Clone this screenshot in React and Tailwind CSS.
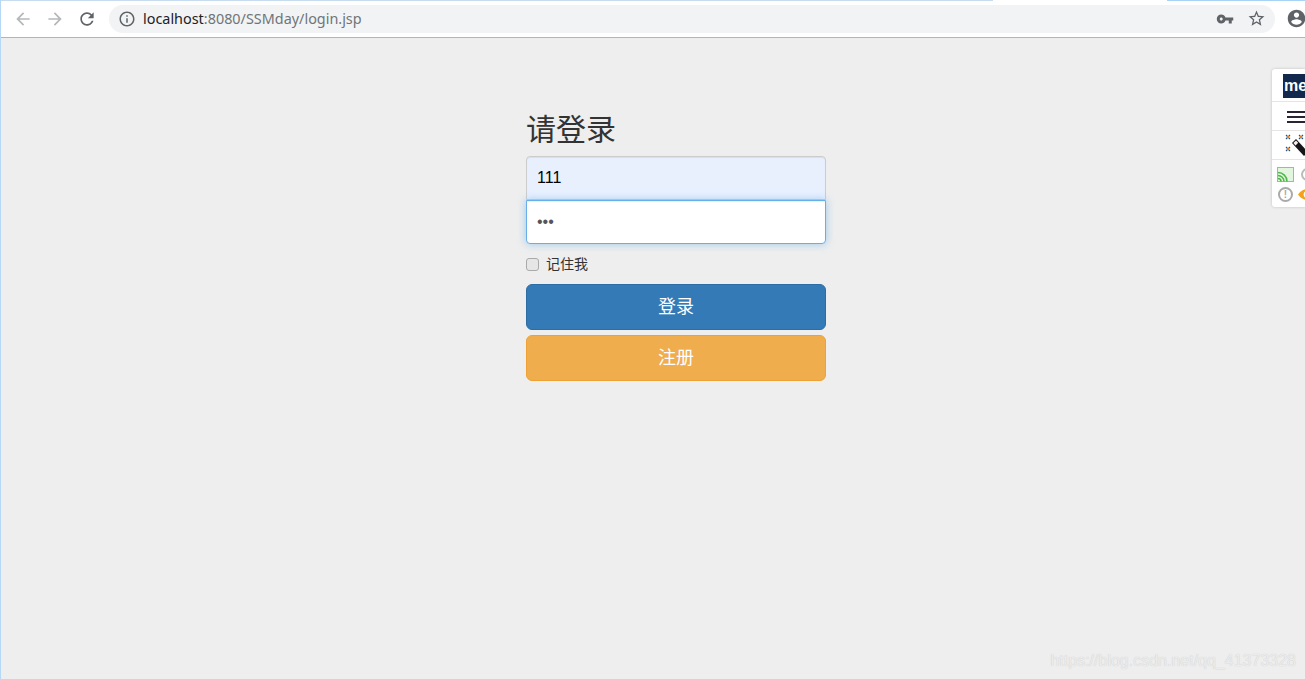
import React from "react";

const cjk = "font-['Liberation_Sans','Noto_Sans_CJK_SC',sans-serif]";

function Mi({ d, size = 24, color = "#5f6368", className = "" }) {
  return (
    <svg width={size} height={size} viewBox="0 0 24 24" fill={color} className={`shrink-0 ${className}`}>
      <path d={d} />
    </svg>
  );
}

const P = {
  back: "M20 11H7.83l5.59-5.59L12 4l-8 8 8 8 1.41-1.41L7.83 13H20v-2z",
  fwd: "M12 4l-1.41 1.41L16.17 11H4v2h12.17l-5.58 5.59L12 20l8-8z",
  reload: "M17.65 6.35C16.2 4.9 14.21 4 12 4c-4.42 0-7.99 3.58-7.99 8s3.57 8 7.99 8c3.73 0 6.84-2.55 7.73-6h-2.08c-.82 2.33-3.04 4-5.65 4-3.31 0-6-2.69-6-6s2.69-6 6-6c1.66 0 3.14.69 4.22 1.78L13 11h7V4l-2.35 2.35z",
  info: "M11 7h2v2h-2zm0 4h2v6h-2zm1-9C6.48 2 2 6.48 2 12s4.48 10 10 10 10-4.48 10-10S17.52 2 12 2zm0 18c-4.41 0-8-3.59-8-8s3.59-8 8-8 8 3.59 8 8-3.59 8-8 8z",
  key: "M12.65 10C11.83 7.67 9.61 6 7 6c-3.31 0-6 2.69-6 6s2.69 6 6 6c2.61 0 4.83-1.67 5.65-4H17v4h4v-4h2v-4H12.65zM7 14c-1.1 0-2-.9-2-2s.9-2 2-2 2 .9 2 2-.9 2-2 2z",
  star: "M22 9.24l-7.19-.62L12 2 9.19 8.63 2 9.24l5.46 4.73L5.82 21 12 17.27 18.18 21l-1.63-7.03L22 9.24zM12 15.4l-3.76 2.27 1-4.28-3.32-2.88 4.38-.38L12 6.1l1.71 4.04 4.38.38-3.32 2.88 1 4.28L12 15.4z",
  user: "M12 2C6.48 2 2 6.48 2 12s4.48 10 10 10 10-4.48 10-10S17.52 2 12 2zm0 3c1.66 0 3 1.34 3 3s-1.34 3-3 3-3-1.34-3-3 1.34-3 3-3zm0 14.2c-2.5 0-4.71-1.28-6-3.22.03-1.99 4-3.08 6-3.08 1.99 0 5.97 1.09 6 3.08-1.29 1.94-3.5 3.22-6 3.22z",
};

function TopBar() {
  return (
    <div className="relative flex h-[38px] shrink-0 items-center border-b border-[#b4b4b4] bg-white pl-[12px]">
      <div className="absolute left-0 top-0 h-px w-[992px] bg-[#c8dcf0]" />
      <div className="absolute right-0 top-0 h-px w-[138px] bg-[#a9d3f5]" />
      <Mi d={P.back} size={20} color="#b5b8bb" />
      <Mi d={P.fwd} size={20} color="#b5b8bb" className="ml-3" />
      <Mi d={P.reload} size={20} className="ml-3" />
      <div className="ml-3 flex h-[28px] w-[1166px] shrink-0 items-center rounded-full bg-[#f1f3f4] pl-[9px] pr-[9px]">
        <Mi d={P.info} size={18} />
        <span className="ml-[7px] text-[14.4px] text-[#202124]">localhost</span>
        <span className="text-[14.4px] text-[#70757a]">:8080/SSMday/login.jsp</span>
        <div className="ml-auto flex items-center gap-[13px]">
          <Mi d={P.key} size={18} />
          <Mi d={P.star} size={19} />
        </div>
      </div>
      <Mi d={P.user} size={21} className="ml-[11px]" />
    </div>
  );
}

function LoginForm() {
  return (
    <form className={`ml-[525px] mt-[71px] flex w-[300px] flex-col ${cjk}`}>
      <h2 className="h-[47px] text-[30px] leading-[41px] text-[#333]">请登录</h2>
      <input
        readOnly
        value="111"
        className="h-[44px] w-full rounded-t-[4px] border border-[#ccc] bg-[#e8f0fe] px-[10px] text-base text-black shadow-[inset_0_1px_1px_rgba(0,0,0,0.075)] outline-none"
      />
      <input
        readOnly
        type="password"
        value="111"
        className="h-[44px] w-full rounded-b-[4px] border border-[#66afe9] bg-white px-[10px] text-base text-[#555] shadow-[inset_0_1px_1px_rgba(0,0,0,0.075),0_0_8px_rgba(102,175,233,0.6)] outline-none"
      />
      <label className="mt-[14px] flex h-[13px] items-center text-[14px] leading-none text-[#333]">
        <span className="h-[13px] w-[13px] rounded-[3px] border border-[#aaa] bg-[#e6e6e6]" />
        <span className="ml-[7px] pb-[2px]">记住我</span>
      </label>
      <button type="button" className="mt-[13px] h-[46px] w-full rounded-[6px] border border-[#2e6da4] bg-[#337ab7] text-[18px] text-white">
        登录
      </button>
      <button type="button" className="mt-[5px] h-[46px] w-full rounded-[6px] border border-[#eea236] bg-[#f0ad4e] text-[18px] text-white">
        注册
      </button>
    </form>
  );
}

function SidePanel() {
  return (
    <div className="absolute right-0 top-[69px] flex h-[138px] w-[33px] flex-col overflow-hidden rounded-l-[3px] bg-white shadow-[0_0_3px_rgba(0,0,0,0.2)]">
      <div className="flex h-[33px] shrink-0 items-center border-b border-[#e5e5e5] pl-[11px] pt-[2px]">
        <div className="flex h-[24px] w-[30px] shrink-0 items-center bg-[#12284c] pl-[1px] font-['Liberation_Sans',sans-serif] text-[16px] font-bold text-white">
          me
        </div>
      </div>
      <div className="flex h-[29px] shrink-0 flex-col justify-center gap-[3px] border-b border-[#e5e5e5] pl-[15px] pt-[2px]">
        <div className="h-[2px] w-[20px] bg-[#2c2430]" />
        <div className="h-[2px] w-[20px] bg-[#2c2430]" />
        <div className="h-[2px] w-[20px] bg-[#2c2430]" />
      </div>
      <div className="h-[29px] shrink-0 border-b border-[#e5e5e5] pl-[13px]">
        <svg width="20" height="28" viewBox="0 0 20 28">
          <path d="M1 4l4 4M5 4l-4 4M14 4l4 4M18 4l-4 4M1 16l4 4M5 16l-4 4" stroke="#27557f" strokeWidth="1.1" />
          <rect x="2" y="5" width="2" height="2" fill="#e8821e" />
          <rect x="15" y="5" width="2" height="2" fill="#e8821e" />
          <rect x="2" y="17" width="2" height="2" fill="#e8821e" />
          <path d="M7 12l4-4 12 13-4 4z" fill="#15151a" />
          <path d="M8.4 12l2.6-2.6 2.2 2.4-2.6 2.6z" fill="#f2f2f2" />
        </svg>
      </div>
      <div className="flex flex-1 flex-col gap-[5px] pl-[5px] pt-[7px]">
        <div className="flex items-center gap-[7px]">
          <svg width="17" height="15" viewBox="0 0 17 15" className="shrink-0">
            <rect x="0.5" y="0.5" width="16" height="14" fill="#e2f5df" stroke="#85cc80" />
            <path d="M1 5.5a9 9 0 0 1 9 9M1 8.5a6 6 0 0 1 6 6M1 11.5a3 3 0 0 1 3 3" fill="none" stroke="#4fb748" strokeWidth="1.5" />
          </svg>
          <div className="h-[13px] w-[13px] shrink-0 rounded-full border-2 border-[#bbb]" />
        </div>
        <div className="flex items-center gap-[5px] pl-px">
          <div className="flex h-[15px] w-[15px] shrink-0 items-center justify-center rounded-full border-2 border-[#aaa] font-['Liberation_Sans',sans-serif] text-[10px] font-bold leading-none text-[#aaa]">
            !
          </div>
          <svg width="18" height="11" viewBox="0 0 18 11" className="shrink-0">
            <path d="M0 5.5C3 1.5 6 0 9.5 0S16 1.5 18 5.5C16 9.5 13 11 9.5 11S3 9.5 0 5.5z" fill="#f5a11c" />
            <circle cx="9" cy="5.5" r="3.4" fill="#fff" />
            <circle cx="9" cy="5.5" r="1.5" fill="#f5a11c" />
          </svg>
        </div>
      </div>
    </div>
  );
}

export default function App() {
  return (
    <div className="relative flex h-[679px] w-[1305px] flex-col overflow-hidden border-l border-[#b5d8f7] bg-[#eeeeee]">
      <TopBar />
      <LoginForm />
      <SidePanel />
      <div className="absolute right-[9px] top-[651px] font-['Liberation_Sans',sans-serif] text-[16px] leading-[20px] text-[#ececec] [text-shadow:0_0_1px_#c4c4c4]">
        https://blog.csdn.net/qq_41373328
      </div>
    </div>
  );
}
